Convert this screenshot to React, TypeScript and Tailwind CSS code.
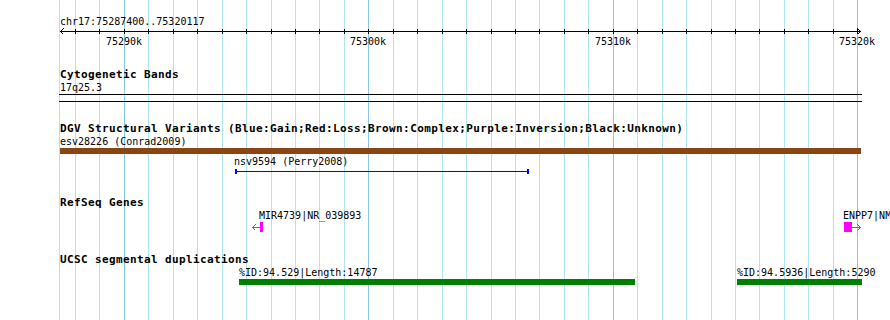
const base = 75290; // kb at the first major tick
const pxPerKb = 24.45;
const xOf = (kb: number) => Math.floor(124.3 + (kb - base) * pxPerKb);

const gridKb = Array.from({ length: 33 }, (_, i) => 75288 + i);
const majors = [75290, 75300, 75310, 75320];

function Title({ children, className = "" }: { children: string; className?: string }) {
  return (
    <div className={`ml-[60px] h-[13px] whitespace-nowrap text-[11px] font-bold leading-[13px] tracking-[0.38px] ${className}`}>
      {children}
    </div>
  );
}

function Ruler() {
  return (
    <svg width={890} height={7} className="block" shapeRendering="crispEdges">
      <line x1={60} y1={3.5} x2={861} y2={3.5} stroke="#000" />
      {gridKb.map((kb) => (
        <line key={kb} x1={xOf(kb) + 0.5} y1={1} x2={xOf(kb) + 0.5} y2={6} stroke="#000" />
      ))}
      <polyline points="63.5,0.5 60.5,3.5 63.5,6.5" fill="none" stroke="#000" />
      <polyline points="857.5,0.5 860.5,3.5 857.5,6.5" fill="none" stroke="#000" />
    </svg>
  );
}

export default function App() {
  return (
    <div className="relative h-[320px] w-[890px] overflow-hidden bg-white font-['DejaVu_Sans_Mono','Liberation_Mono',monospace] text-black">
      {/* grid */}
      <div className="absolute inset-0">
        <div className="absolute top-0 bottom-0 left-[59px] w-px bg-[#b0e6ee]" />
        {gridKb.map((kb) => (
          <div
            key={kb}
            className={`absolute top-0 bottom-0 w-px ${kb % 10 === 0 ? "bg-[#8cc6e6]" : "bg-[#b0e6ee]"}`}
            style={{ left: xOf(kb) }}
          />
        ))}
      </div>

      <div className="relative pt-[15px] text-[10px] leading-[13px]">
        <div className="ml-[60px] h-[13px]">chr17:75287400..75320117</div>
        <Ruler />
        <div className="relative h-[13px]">
          {majors.map((kb) => (
            <span key={kb} className="absolute top-0" style={{ left: xOf(kb) - 18 }}>
              {kb}k
            </span>
          ))}
        </div>

        {/* cytogenetic bands */}
        <Title className="mt-[20px]">Cytogenetic Bands</Title>
        <div className="ml-[60px] h-[13px]">17q25.3</div>
        <div className="ml-[59px] h-[8px] w-[803px] border-y border-black" />

        {/* DGV */}
        <Title className="mt-[20px]">
          DGV Structural Variants (Blue:Gain;Red:Loss;Brown:Complex;Purple:Inversion;Black:Unknown)
        </Title>
        <div className="ml-[60px] h-[13px]">esv28226 (Conrad2009)</div>
        <div className="ml-[60px] h-[6px] w-[801px] bg-[#8b4513]" />
        <div className="mt-px ml-[234px] h-[13px]">nsv9594 (Perry2008)</div>
        <svg width={890} height={6} className="mt-px block" shapeRendering="crispEdges">
          <line x1={235} y1={2.5} x2={529} y2={2.5} stroke="#0000ff" />
          <rect x={235} y={0} width={2} height={5} fill="#0000ff" />
          <rect x={527} y={0} width={2} height={5} fill="#0000ff" />
        </svg>

        {/* RefSeq */}
        <Title className="mt-[21px]">RefSeq Genes</Title>
        <div className="relative h-[13px] whitespace-nowrap">
          <span className="absolute left-[259px] top-0">MIR4739|NR_039893</span>
          <span className="absolute left-[843px] top-0">ENPP7|NM_178543</span>
        </div>
        <svg width={890} height={10} className="block" shapeRendering="crispEdges">
          <rect x={260} y={0} width={3} height={10} fill="#ff00ff" />
          <line x1={252} y1={5.5} x2={260} y2={5.5} stroke="#ff00ff" />
          <polyline points="255.5,2.5 252.5,5.5 255.5,8.5" fill="none" stroke="#ff00ff" />
          <rect x={844} y={0} width={8} height={10} fill="#ff00ff" />
          <line x1={852} y1={5.5} x2={861} y2={5.5} stroke="#ff00ff" />
          <polyline points="857.5,2.5 860.5,5.5 857.5,8.5" fill="none" stroke="#ff00ff" />
        </svg>

        {/* segmental dups */}
        <Title className="mt-[21px]">UCSC segmental duplications</Title>
        <div className="relative h-[13px] whitespace-nowrap">
          <span className="absolute left-[239px] top-0">%ID:94.529|Length:14787</span>
          <span className="absolute left-[737px] top-0">%ID:94.5936|Length:5290</span>
        </div>
        <div className="flex h-[6px]">
          <div className="ml-[239px] w-[396px] bg-[#008000]" />
          <div className="ml-[102px] w-[125px] bg-[#008000]" />
        </div>
      </div>
    </div>
  );
}
